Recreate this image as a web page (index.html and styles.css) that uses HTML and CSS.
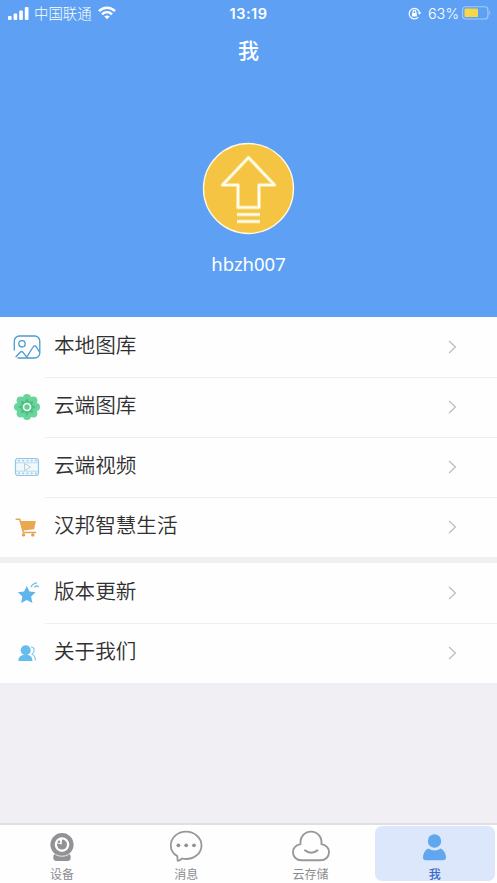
FILE: index.html
```html
<!DOCTYPE html>
<html lang="zh-CN">
<head>
<meta charset="utf-8">
<title>我</title>
<link rel="stylesheet" href="styles.css">
</head>
<body>
<div class="app">
  <header class="hero">
    <div class="status">
      <div class="status-left">
        <svg width="21" height="13" viewBox="0 0 21 13" fill="#fff"><rect x="0" y="9" width="3.6" height="4" rx="1"/><rect x="5.6" y="6.5" width="3.6" height="6.5" rx="1"/><rect x="11.2" y="3.5" width="3.6" height="9.5" rx="1"/><rect x="16.8" y="0" width="3.7" height="13" rx="1"/></svg>
        <span class="carrier">中国联通</span>
        <svg width="18" height="14" viewBox="0 0 18 14" fill="none" stroke="#fff" stroke-width="2.6"><path d="M1 5.2C5.5.5 12.500.5 17 5.200M4 8.400c2.900-2.800 7.100-2.800 10 0"/><path d="M9 13.300l-2.700-2.700c1.500-1.400 3.900-1.400 5.400 0z" fill="#fff" stroke="none"/></svg>
      </div>
      <div class="clock">13:19</div>
      <div class="status-right">
        <svg width="14" height="13" viewBox="0 0 14 13" fill="none" stroke="#fff" stroke-width="1.200"><path d="M10.300 10.100A5.200 5.200 0 1 1 11.400 5.200"/><path d="M9.500 5.200h4l-2 2.500z" fill="#fff" stroke="none"/><rect x="4" y="5.900" width="4.800" height="3.700" rx=".5" fill="#fff" stroke="none"/><path d="M5 6V4.800a1.400 1.400 0 0 1 2.800 0V6"/></svg>
        <span class="percent">63%</span>
        <svg width="29" height="14" viewBox="0 0 29 14"><rect x=".6" y=".7" width="25.300" height="12.300" rx="3" fill="none" stroke="#a5cbf7" stroke-width="1.100"/><rect x="2.500" y="2.600" width="13.500" height="8.500" rx="1.200" fill="#f8d64a"/><path d="M27.200 4.800c1.500.7 1.500 3.500 0 4.200z" fill="#a5cbf7"/></svg>
      </div>
    </div>
    <h1 class="title">我</h1>
    <svg class="avatar" width="93" height="93" viewBox="0 0 93 93" fill="none"><circle cx="46.500" cy="46.500" r="45" fill="#f5c443" stroke="#fff8e2" stroke-width="1.300"/><g stroke="#fae08b" stroke-width="4" stroke-linejoin="round"><path d="M46.500 15.500L20.500 43H36v22.500h21V43h15.500z"/><path d="M35 72.500h23M35 79.500h23"/></g><g stroke="#fffdf2" stroke-width="2.200" stroke-linejoin="round"><path d="M46.500 15.500L20.500 43H36v22.500h21V43h15.500z"/><path d="M35 72.500h23M35 79.500h23"/></g></svg>
    <div class="username">hbzh007</div>
  </header>

  <main>
    <ul class="menu">
      <li class="row">
        <svg class="icon" viewBox="0 0 28 28" fill="none" stroke="#4b9bd0" stroke-width="1.300" stroke-linejoin="round" stroke-linecap="round"><path d="M1.300 17V8a5 5 0 0 1 5-5h15.500a5 5 0 0 1 5 5v12a5 5 0 0 1-5 5H5"/><circle cx="9" cy="10.800" r="3.200"/><path d="M3 23.800l4.200-4.600q1.300-1.300 2.600 0l3.900 5 6.400-10.200q1.600-2.300 3.300 0l3 5"/></svg>
        <span class="label">本地图库</span>
        <svg class="chevron" viewBox="0 0 9 14"><path d="M1 1l6.500 6L1 13"/></svg>
      </li>
      <li class="row">
        <svg class="icon" viewBox="0 0 28 28"><g fill="#69d49b"><circle cx="14" cy="5" r="4"/><circle cx="20.400" cy="7.600" r="4"/><circle cx="23" cy="14" r="4"/><circle cx="20.400" cy="20.400" r="4"/><circle cx="14" cy="23" r="4"/><circle cx="7.600" cy="20.400" r="4"/><circle cx="5" cy="14" r="4"/><circle cx="7.600" cy="7.600" r="4"/></g><path fill="#4bbf80" d="M14 5l2 3.600L20 8l-.5 4L23 14l-3.500 2 .5 4-4-.6L14 23l-2-3.600L8 20l.5-4L5 14l3.500-2L8 8l4 .6z"/><circle cx="14" cy="14" r="5.800" fill="#50bf83"/><circle cx="14" cy="14" r="3.500" fill="#65cb94" stroke="#effff5" stroke-width="1.700"/></svg>
        <span class="label">云端图库</span>
        <svg class="chevron" viewBox="0 0 9 14"><path d="M1 1l6.500 6L1 13"/></svg>
      </li>
      <li class="row">
        <svg class="icon" viewBox="0 0 28 28" fill="none" stroke="#a3cfea"><rect x="2.500" y="5.500" width="23" height="17" rx="2.500" fill="#f1f8fc" stroke="#92c6e6" stroke-width="1.200"/><path d="M3 9.800h22M3 18.200h22" stroke-width=".7"/><path d="M5 7.600h19M5 20.400h19" stroke-width="1.800" stroke-dasharray="2 2.200"/><path d="M11.500 10.500v7l6-3.500z" stroke="#b4cfdf" stroke-width="1"/></svg>
        <span class="label">云端视频</span>
        <svg class="chevron" viewBox="0 0 9 14"><path d="M1 1l6.500 6L1 13"/></svg>
      </li>
      <li class="row">
        <svg class="icon" viewBox="0 0 28 28"><path d="M3.200 6.200h3.600l3.500 13.200h12.200" fill="none" stroke="#e6a454" stroke-width="1.500" stroke-linecap="round" stroke-linejoin="round"/><path d="M7.600 8h15.200l-1.600 8.300-11.400 1.100z" fill="#eba650"/><circle cx="10.500" cy="21.900" r="1.700" fill="#e59e4c"/><circle cx="19.800" cy="21.900" r="1.700" fill="#e59e4c"/></svg>
        <span class="label">汉邦智慧生活</span>
        <svg class="chevron" viewBox="0 0 9 14"><path d="M1 1l6.500 6L1 13"/></svg>
      </li>
    </ul>
    <ul class="menu">
      <li class="row">
        <svg class="icon" viewBox="0 0 28 28"><path d="M13.800 7l2.700 5.400 6.200.8-4.600 4.300 1.300 6.600-5.600-3.100-5.700 3.100 1.300-6.600-4.600-4.300 6.300-.8z" fill="#5fb5ec"/><path d="M18 8.200c.9-2.400 3-4 6-4.300M21.200 8.300c1.200-1.400 2.800-1.600 4.600-.7" fill="none" stroke="#72c1ea" stroke-width="1.300"/></svg>
        <span class="label">版本更新</span>
        <svg class="chevron" viewBox="0 0 9 14"><path d="M1 1l6.500 6L1 13"/></svg>
      </li>
      <li class="row">
        <svg class="icon" viewBox="0 0 28 28"><circle cx="12.700" cy="11.300" r="5" fill="#66bdec"/><path d="M5.300 22c0-4 2.500-5.800 5.200-6.100h4.400c2.700.3 4.500 2.100 4.500 6.100z" fill="#66bdec"/><path d="M17.800 8c4.200-.3 4.200 4.900 1.300 7.200 2.100.9 3.200 2.900 3.400 6.200" fill="none" stroke="#82cbed" stroke-width="1.200"/></svg>
        <span class="label">关于我们</span>
        <svg class="chevron" viewBox="0 0 9 14"><path d="M1 1l6.500 6L1 13"/></svg>
      </li>
    </ul>
  </main>

  <nav class="tabs">
    <a class="tab">
      <svg class="tab-icon" viewBox="0 0 40 34"><circle cx="20" cy="14.600" r="11.600" fill="#929296"/><rect x="11.300" y="23.800" width="17.400" height="7.200" rx="3.300" fill="#929296"/><path d="M13.300 24.500q6.700 3.500 13.400 0" fill="none" stroke="#fff" stroke-width=".8"/><circle cx="20" cy="14.600" r="7.300" fill="#fff"/><path d="M20 9.600a5 5 0 1 1-5 5q0-.7.200-1.400l4.500 1.400z" fill="#929296"/><circle cx="17" cy="11.800" r="1.300" fill="#929296"/></svg>
      <span>设备</span>
    </a>
    <a class="tab">
      <svg class="tab-icon" viewBox="0 0 40 34" fill="none"><path d="M11.300 26.100C7.200 23.700 4.800 19.800 4.800 15.400 4.800 7.800 11.600 1.700 20 1.700s15.500 6.100 15.500 13.700S28.600 29 20 29q-2.100 0-4-.5-2 2-4.300 2.300z" stroke="#98989b" stroke-width="1.800" stroke-linejoin="round"/><g fill="#929296"><circle cx="12.400" cy="15.300" r="1.900"/><circle cx="20.200" cy="15.300" r="1.900"/><circle cx="28" cy="15.300" r="1.900"/></g></svg>
      <span>消息</span>
    </a>
    <a class="tab">
      <svg class="tab-icon" viewBox="0 0 40 34" fill="none" stroke="#98989b" stroke-width="1.900" stroke-linecap="round"><path d="M10.500 30.300C5.500 30.300 2 26.800 2 22.300c0-4.300 3.200-7.300 7.500-8.200C8.900 7 13.600 1.600 20 1.600S31.100 7 30.500 14.100c4.300.9 7.500 3.900 7.500 8.200 0 4.500-3.500 8-8.500 8z"/><path d="M14 20.300c3.300 3.200 9.200 3.200 12.500 0"/></svg>
      <span>云存储</span>
    </a>
    <a class="tab active">
      <svg class="tab-icon" viewBox="0 0 40 34" fill="#60a7ef"><circle cx="19.500" cy="11" r="6.700"/><path d="M13.300 18.500q6.200 4.200 12.400 0c3.500 1.700 5.300 5 5.300 9q0 2.800-3 2.800H11q-3 0-3-2.800c0-4 1.800-7.300 5.300-9z"/></svg>
      <span>我</span>
    </a>
  </nav>
</div>
</body>
</html>
```
FILE: styles.css
```css
* { box-sizing: border-box; }

body {
  margin: 0;
  font-family: "Inter", "Noto Sans CJK SC", sans-serif;
}

.app {
  display: flex;
  flex-direction: column;
  width: 497px;
  height: 883px;
  background: #f1eff3;
  overflow: hidden;
}

svg { display: block; flex: none; }

.hero {
  display: flex;
  flex-direction: column;
  align-items: center;
  height: 317px;
  background: #5da0f4;
  color: #fff;
}

.status {
  display: grid;
  grid-template-columns: 1fr auto 1fr;
  align-items: center;
  width: 100%;
  height: 25px;
  padding: 0 6px 0 8px;
  line-height: 25px;
}

.status-left, .status-right { display: flex; align-items: center; }
.status-left { gap: 5px; }
.status-right { justify-content: flex-end; }
.carrier { font-size: 14.4px; font-weight: 300; margin: 1px 1px 0 0; }
.clock { font-size: 14.5px; font-weight: 600; letter-spacing: 0.5px; margin-right: 2px; }
.percent { font-size: 14.5px; font-weight: 300; margin: 0 3px 0 6px; }

.title {
  margin: 10px 0 0;
  font-size: 21px;
  font-weight: 500;
  line-height: 32px;
}

.avatar { margin-top: 75px; }

.username {
  margin-top: 14px;
  font-family: "Noto Sans", sans-serif;
  font-size: 18.5px;
  font-weight: 400;
  line-height: 30px;
}

.menu {
  margin: 0 0 6px;
  padding: 0;
  list-style: none;
  background: #fefefe;
}

.row {
  display: flex;
  align-items: center;
  height: 60px;
  padding: 0 40px 0 13px;
}

.row + .row {
  background: linear-gradient(#f0eef1, #f0eef1) 45px 0 / 100% 1px no-repeat;
}

.icon { width: 28px; height: 28px; }

.label {
  flex: 1;
  margin-left: 13px;
  padding-bottom: 3px;
  color: #303030;
  font-size: 20.6px;
  font-weight: 350;
  line-height: 30px;
}

.chevron {
  width: 9px;
  height: 14px;
  fill: none;
  stroke: #bcbcc0;
  stroke-width: 1.2;
}

.tabs {
  display: grid;
  grid-template-columns: repeat(4, 1fr);
  height: 60px;
  margin-top: auto;
  border-top: 2px solid #dfdee1;
  background: #fefefe;
}

.tab {
  display: flex;
  flex-direction: column;
  align-items: center;
  height: 55px;
  margin: 1px 2px 2px;
  padding-top: 4px;
  border-radius: 7px;
  color: #8c8c90;
  font-size: 12px;
  line-height: 18px;
}

.tab span { margin-top: 2px; }

.tab-icon { width: 40px; height: 34px; }

.active {
  background: #dce7fb;
  color: #3569c8;
  font-weight: 500;
}
```
